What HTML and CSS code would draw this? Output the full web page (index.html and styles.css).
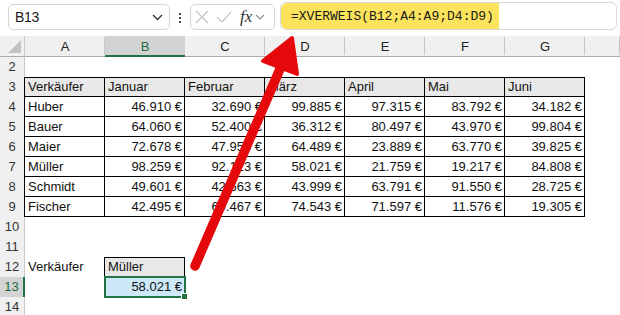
FILE: index.html
```html
<!DOCTYPE html>
<html lang="de">
<head>
<meta charset="utf-8">
<title>XVERWEIS</title>
<link rel="stylesheet" href="styles.css">
</head>
<body>
<div class="page">
  <div class="toolbar">
    <div class="namebox">
      <span class="ref">B13</span>
      <svg class="chev" width="11" height="7" viewBox="0 0 11 7"><polyline points="1,1 5.5,5.5 10,1" fill="none" stroke="#333" stroke-width="1.3"/></svg>
    </div>
    <div class="dots"><i></i><i></i><i></i></div>
    <div class="fnbox">
      <svg class="ico" width="14" height="14" viewBox="0 0 14 14"><path d="M1 1 L13 13 M13 1 L1 13" stroke="#c4c4c4" stroke-width="1.2" fill="none"/></svg>
      <svg class="ico" width="16" height="12" viewBox="0 0 16 12"><polyline points="1,6 6,11 15,1" stroke="#c4c4c4" stroke-width="1.2" fill="none"/></svg>
      <span class="fx">fx</span>
      <svg class="ico small" width="10" height="6" viewBox="0 0 10 6"><polyline points="1,1 5,5 9,1" fill="none" stroke="#8a8a8a" stroke-width="1.1"/></svg>
    </div>
    <div class="formula"><span class="hl">=XVERWEIS(B12;A4:A9;D4:D9)</span></div>
  </div>

  <div class="sheet">
    <div class="corner"><svg width="13" height="13" viewBox="0 0 13 13"><polygon points="13,0 13,13 0,13" fill="#c2c2c2"/></svg></div>
    <div class="ch">A</div><div class="ch sc">B</div><div class="ch">C</div><div class="ch">D</div><div class="ch">E</div><div class="ch">F</div><div class="ch">G</div><div class="ch last"></div>

    <div class="rh">2</div><div class="c"></div><div class="c"></div><div class="c"></div><div class="c"></div><div class="c"></div><div class="c"></div><div class="c"></div><div class="c"></div>

    <div class="rh">3</div>
    <div class="c t th top left">Verkäufer</div><div class="c t th top">Januar</div><div class="c t th top">Februar</div><div class="c t th top">März</div><div class="c t th top">April</div><div class="c t th top">Mai</div><div class="c t th top">Juni</div><div class="c"></div>

    <div class="rh">4</div>
    <div class="c t left">Huber</div><div class="c t num">46.910 €</div><div class="c t num">32.690 €</div><div class="c t num">99.885 €</div><div class="c t num">97.315 €</div><div class="c t num">83.792 €</div><div class="c t num">34.182 €</div><div class="c"></div>

    <div class="rh">5</div>
    <div class="c t left">Bauer</div><div class="c t num">64.060 €</div><div class="c t num">52.400 €</div><div class="c t num">36.312 €</div><div class="c t num">80.497 €</div><div class="c t num">43.970 €</div><div class="c t num">99.804 €</div><div class="c"></div>

    <div class="rh">6</div>
    <div class="c t left">Maier</div><div class="c t num">72.678 €</div><div class="c t num">47.955 €</div><div class="c t num">64.489 €</div><div class="c t num">23.889 €</div><div class="c t num">63.770 €</div><div class="c t num">39.825 €</div><div class="c"></div>

    <div class="rh">7</div>
    <div class="c t left">Müller</div><div class="c t num">98.259 €</div><div class="c t num">92.123 €</div><div class="c t num">58.021 €</div><div class="c t num">21.759 €</div><div class="c t num">19.217 €</div><div class="c t num">84.808 €</div><div class="c"></div>

    <div class="rh">8</div>
    <div class="c t left">Schmidt</div><div class="c t num">49.601 €</div><div class="c t num">42.663 €</div><div class="c t num">43.999 €</div><div class="c t num">63.791 €</div><div class="c t num">91.550 €</div><div class="c t num">28.725 €</div><div class="c"></div>

    <div class="rh">9</div>
    <div class="c t left">Fischer</div><div class="c t num">42.495 €</div><div class="c t num">60.467 €</div><div class="c t num">74.543 €</div><div class="c t num">71.597 €</div><div class="c t num">11.576 €</div><div class="c t num">19.305 €</div><div class="c"></div>

    <div class="rh">10</div><div class="c"></div><div class="c"></div><div class="c"></div><div class="c"></div><div class="c"></div><div class="c"></div><div class="c"></div><div class="c"></div>

    <div class="rh">11</div><div class="c"></div><div class="c"></div><div class="c"></div><div class="c"></div><div class="c"></div><div class="c"></div><div class="c"></div><div class="c"></div>

    <div class="rh">12</div>
    <div class="c">Verkäufer</div><div class="c t th top left">Müller</div><div class="c"></div><div class="c"></div><div class="c"></div><div class="c"></div><div class="c"></div><div class="c"></div>

    <div class="rh sr">13</div>
    <div class="c"></div><div class="c num sel">58.021 €</div><div class="c"></div><div class="c"></div><div class="c"></div><div class="c"></div><div class="c"></div><div class="c"></div>

    <div class="rh">14</div><div class="c"></div><div class="c"></div><div class="c"></div><div class="c"></div><div class="c"></div><div class="c"></div><div class="c"></div><div class="c"></div>
  </div>

  <svg class="arrow" width="620" height="315" viewBox="0 0 620 315">
    <line x1="195" y1="266" x2="283" y2="62" stroke="#e6090c" stroke-width="9.5" stroke-linecap="round"/>
    <path d="M292 38 L263 61 L297 74 Z" fill="#e6090c" stroke="#e6090c" stroke-width="4" stroke-linejoin="round"/>
  </svg>
</div>
</body>
</html>
```

FILE: styles.css
```css
* { box-sizing: border-box; }

html, body {
  margin: 0;
  padding: 0;
  background: #ffffff;
}

body {
  width: 620px;
  height: 315px;
  overflow: hidden;
  font-family: "Liberation Sans", Arial, sans-serif;
  color: #111;
}

.page {
  position: relative;
  width: 620px;
  height: 315px;
}

/* ---------- toolbar ---------- */
.toolbar {
  display: flex;
  align-items: flex-start;
  height: 36px;
  padding-top: 2px;
}

.namebox {
  margin-left: 8px;
  margin-top: 2px;
  width: 162px;
  height: 26px;
  border: 1px solid #d6d6d6;
  border-radius: 5px;
  display: flex;
  align-items: center;
  justify-content: space-between;
  padding: 0 6px 0 6px;
  font-size: 14px;
  letter-spacing: -0.3px;
  color: #1a1a1a;
}

.namebox .chev { margin-right: 0px; }

.dots {
  margin-left: 9px;
  margin-top: 11px;
  width: 3px;
  display: flex;
  flex-direction: column;
  gap: 2px;
}

.dots i {
  display: block;
  width: 2px;
  height: 2px;
  background: #444;
}

.fnbox {
  margin-left: 8px;
  margin-top: 2px;
  width: 85px;
  height: 26px;
  border: 1px solid #d6d6d6;
  border-radius: 5px;
  display: flex;
  align-items: center;
  padding-left: 4px;
}

.fnbox .ico { flex: none; margin-right: 7px; }
.fnbox .ico.small { margin-right: 0; margin-left: 3px; }

.fx {
  font-family: "Liberation Serif", "Times New Roman", serif;
  font-style: italic;
  font-size: 17px;
  color: #333;
  line-height: 1;
  margin-left: 1px;
  margin-top: -2px;
}

.formula {
  margin-left: 5px;
  margin-right: 3px;
  flex: 1;
  height: 28px;
  border: 1px solid #dadada;
  border-radius: 6px;
  overflow: hidden;
  display: flex;
}

.hl {
  display: block;
  width: 218px;
  height: 100%;
  background: #fbe35b;
  padding-left: 10px;
  font-family: "Liberation Mono", "Courier New", monospace;
  font-size: 13px;
  line-height: 27px;
  color: #1a1a1a;
  border-radius: 6px 0 0 6px;
}

/* ---------- sheet ---------- */
.sheet {
  display: grid;
  grid-template-columns: 25px repeat(7, 80px) 1fr;
  grid-template-rows: 21px repeat(13, 20px);
  font-size: 13px;
}

.corner {
  background: #f0f0f0;
  border-bottom: 1px solid #ababab;
  border-right: 1px solid #c8c8c8;
  display: flex;
  justify-content: flex-end;
  align-items: flex-end;
  padding: 0 3px 3px 0;
}

.ch {
  background:
    linear-gradient(#c6c6c6, #c6c6c6) right 1px / 1px 18px no-repeat,
    #f0f0f0;
  border-bottom: 1px solid #ababab;
  text-align: center;
  line-height: 21px;
  color: #222;
}

.ch.sc {
  background: #d3d3d3;
  border-bottom: 2px solid #217346;
  color: #1d6b40;
}

.rh {
  background: #f0f0f0;
  border-right: 1px solid #c8c8c8;
  text-align: center;
  line-height: 20px;
  color: #333;
}

.rh.sr {
  background: #d3d3d3;
  border-right: 2px solid #217346;
  color: #1d6b40;
}

.c {
  padding: 0 3px;
  line-height: 20px;
  white-space: nowrap;
  overflow: hidden;
  color: #111;
}

.t {
  border-right: 1px solid #000;
  border-bottom: 1px solid #000;
  line-height: 19px;
}

.t.top { border-top: 1px solid #000; line-height: 18px; }
.t.left { border-left: 1px solid #000; margin-left: -1px; padding-left: 3px; }

.th { background: #e8e8e8; }

.num { text-align: right; padding-right: 2px; }

.sel {
  position: relative;
  overflow: visible;
  margin: -1px;
  background: #cde8f7;
  border: 2px solid #217346;
  line-height: 18px;
  padding-right: 2px;
}

.sel::after {
  content: "";
  position: absolute;
  right: -4px;
  bottom: -4px;
  width: 5px;
  height: 5px;
  background: #217346;
  border: 1px solid #fff;
}

/* ---------- overlay arrow ---------- */
.arrow {
  position: absolute;
  left: 0;
  top: 0;
  pointer-events: none;
}
```
